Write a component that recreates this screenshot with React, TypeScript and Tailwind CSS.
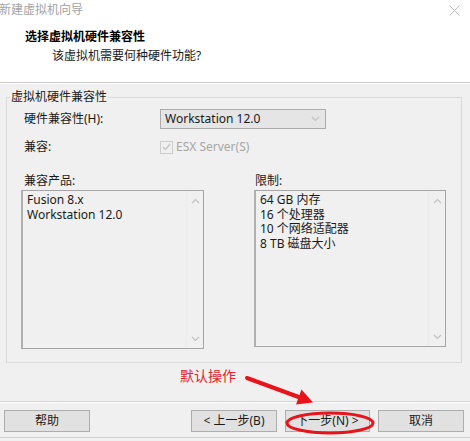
import React from "react";

const FONT = { fontFamily: '"Noto Sans", "Noto Sans CJK SC", sans-serif' };

function Chevron({ up, className }: { up?: boolean; className?: string }) {
  return (
    <svg width="9" height="6" viewBox="0 0 9 6" className={className}>
      <path
        d={up ? "M1 5 L4.5 1.5 L8 5" : "M1 1 L4.5 4.5 L8 1"}
        fill="none"
        stroke="#c2c2c2"
        strokeWidth="1.2"
      />
    </svg>
  );
}

function ListBox({ items, width, height }: { items: string[]; width: string; height: string }) {
  return (
    <div className={`${width} ${height} flex border border-[#a5a5a5] border-l-2 border-l-[#b0b0b0] bg-[#f0f0f0]`}>
      <div className="flex-1 pl-[4px] pt-[2px] text-[12px] leading-[14.7px] text-[#1a1a1a]">
        {items.map((t) => (
          <div key={t}>{t}</div>
        ))}
      </div>
      <div className="w-[17px] flex flex-col items-center justify-between pt-[7px] pb-[6px] border-l border-l-[#ececec]">
        <Chevron up />
        <Chevron />
      </div>
    </div>
  );
}

function Button({ label, width }: { label: string; width: string }) {
  return (
    <div
      className={`${width} h-[22px] flex items-center justify-center bg-[#e1e1e1] border border-[#adadad] text-[12px] text-[#1a1a1a]`}
    >
      {label}
    </div>
  );
}

export default function App() {
  return (
    <div className="relative w-[470px] h-[441px] overflow-hidden bg-[#f0f0f0] flex flex-col" style={FONT}>
      {/* header */}
      <div className="h-[82px] bg-white flex flex-col">
        <div className="h-[20px] flex items-center justify-between">
          <span className="text-[12px] text-[#a3a3a3] -ml-[1px]">新建虚拟机向导</span>
          <svg width="11" height="11" viewBox="0 0 11 11" className="mr-[10px] mt-[1px]">
            <path d="M0.5 0.5 L10.5 10.5 M10.5 0.5 L0.5 10.5" stroke="#bdbdbd" strokeWidth="1" />
          </svg>
        </div>
        <div className="mt-[9px] pl-[25px] h-[16px] leading-[16px] text-[12px] font-bold text-black">
          选择虚拟机硬件兼容性
        </div>
        <div className="mt-[3px] pl-[52px] h-[16px] leading-[16px] text-[12px] text-[#1a1a1a]">
          该虚拟机需要何种硬件功能?
        </div>
      </div>
      <div className="h-px bg-[#cbcbcb]" />
      <div className="h-px bg-white" />

      {/* group box */}
      <fieldset className="mt-[6px] ml-[6px] w-[456px] h-[273px] border border-[#d9d9d9] rounded-none">
        <legend className="ml-[3px] px-px text-[12px] leading-[14px] text-[#1a1a1a]">虚拟机硬件兼容性</legend>

        <div className="mt-[5px] flex items-center h-[20px]">
          <span className="pl-[17px] w-[153px] text-[12px] text-[#1a1a1a]">硬件兼容性(H):</span>
          <div className="w-[166px] h-[20px] flex items-center justify-between bg-[#e5e5e5] border border-[#acacac] pl-[4px] pr-[5px] text-[12px] text-[#1a1a1a]">
            <span>Workstation 12.0</span>
            <Chevron />
          </div>
        </div>

        <div className="mt-[10px] flex items-center h-[16px]">
          <span className="pl-[17px] w-[153px] text-[12px] text-[#1a1a1a]">兼容:</span>
          <div className="w-[13px] h-[13px] border border-[#cccccc] bg-[#f0f0f0] flex items-center justify-center">
            <svg width="9" height="8" viewBox="0 0 9 8">
              <path d="M1 4 L3.5 6.5 L8 1" fill="none" stroke="#c4c4c4" strokeWidth="1.3" />
            </svg>
          </div>
          <span className="ml-[3px] text-[12px] text-[#a6a6a6]">ESX Server(S)</span>
        </div>

        <div className="mt-[19px] flex">
          <div className="ml-[14px] flex flex-col">
            <span className="pl-[3px] h-[16px] leading-[14px] text-[12px] text-[#1a1a1a]">兼容产品:</span>
            <ListBox items={["Fusion 8.x", "Workstation 12.0"]} width="w-[183px]" height="h-[159px]" />
          </div>
          <div className="ml-[50px] flex flex-col">
            <span className="pl-[1px] h-[16px] leading-[14px] text-[12px] text-[#1a1a1a]">限制:</span>
            <ListBox
              items={["64 GB 内存", "16 个处理器", "10 个网络适配器", "8 TB 磁盘大小"]}
              width="w-[192px]"
              height="h-[157px]"
            />
          </div>
        </div>
      </fieldset>

      {/* annotation text */}
      <div className="h-[38px] pl-[180px] pt-[5px] text-[14px] leading-[16px] text-[#e8242c]">默认操作</div>

      <div className="h-px bg-[#d3d3d3]" />
      <div className="h-px bg-white" />

      {/* buttons */}
      <div className="mt-[7px] flex pl-[4px]">
        <Button label="帮助" width="w-[86px]" />
        <div className="ml-[101px]">
          <Button label="< 上一步(B)" width="w-[86px]" />
        </div>
        <div className="ml-[8px]">
          <Button label="下一步(N) >" width="w-[85px]" />
        </div>
        <div className="ml-[8px]">
          <Button label="取消" width="w-[86px]" />
        </div>
      </div>
      <div className="mt-[5px] h-px bg-[#cfcfcf]" />

      {/* red annotations overlay */}
      <svg className="absolute left-0 top-0 pointer-events-none" width="470" height="441" viewBox="0 0 470 441">
        <line x1="247" y1="378" x2="300" y2="397.5" stroke="#e8141c" strokeWidth="4" strokeLinecap="round" />
        <polygon points="313,402.5 296,404.5 301.5,389.5" fill="#e8141c" />
        <ellipse cx="330" cy="423" rx="43" ry="10" fill="none" stroke="#e8141c" strokeWidth="3" />
      </svg>
    </div>
  );
}
